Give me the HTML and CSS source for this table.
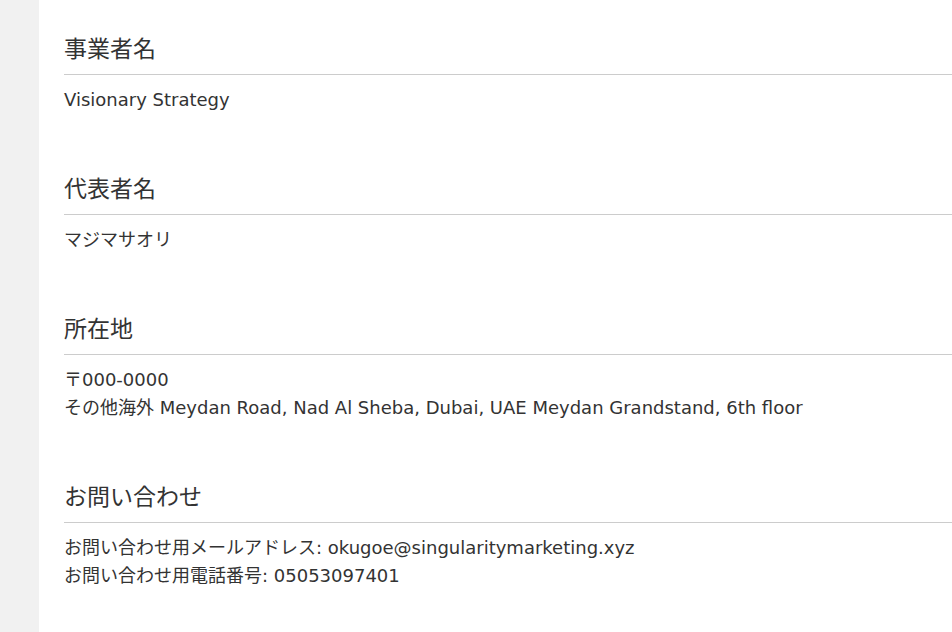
FILE: index.html
```html
<!DOCTYPE html>
<html lang="ja">
<head>
<meta charset="utf-8">
<title>会社概要</title>
<link rel="stylesheet" href="styles.css">
</head>
<body>
<div class="page">
  <aside class="side"></aside>
  <main class="content">
    <section class="item">
      <h2 class="item-title">事業者名</h2>
      <div class="item-body">
        <p>Visionary Strategy</p>
      </div>
    </section>
    <section class="item">
      <h2 class="item-title">代表者名</h2>
      <div class="item-body">
        <p>マジマサオリ</p>
      </div>
    </section>
    <section class="item">
      <h2 class="item-title">所在地</h2>
      <div class="item-body">
        <p>〒000-0000</p>
        <p>その他海外 Meydan Road, Nad Al Sheba, Dubai, UAE Meydan Grandstand, 6th floor</p>
      </div>
    </section>
    <section class="item">
      <h2 class="item-title">お問い合わせ</h2>
      <div class="item-body">
        <p>お問い合わせ用メールアドレス: okugoe@singularitymarketing.xyz</p>
        <p>お問い合わせ用電話番号: 05053097401</p>
      </div>
    </section>
  </main>
</div>
</body>
</html>
```
FILE: styles.css
```css
html, body {
  margin: 0;
  padding: 0;
  height: 100%;
  background: #ffffff;
}
body {
  font-family: "DejaVu Sans", "Noto Sans CJK JP", sans-serif;
  color: #333333;
}
.page {
  display: flex;
  min-height: 100%;
}
.side {
  width: 39px;
  flex: 0 0 39px;
  background: #f1f1f1;
}
.content {
  flex: 1;
  padding: 34px 0 0 25px;
}
.item {
  margin-bottom: 60px;
}
.item-title {
  margin: 0;
  font-size: 23px;
  font-weight: normal;
  line-height: 30px;
  padding-bottom: 10px;
  border-bottom: 1px solid #cccccc;
}
.item-body {
  padding-top: 11px;
  font-size: 18px;
  line-height: 28px;
}
.item-body p {
  margin: 0;
}
```
